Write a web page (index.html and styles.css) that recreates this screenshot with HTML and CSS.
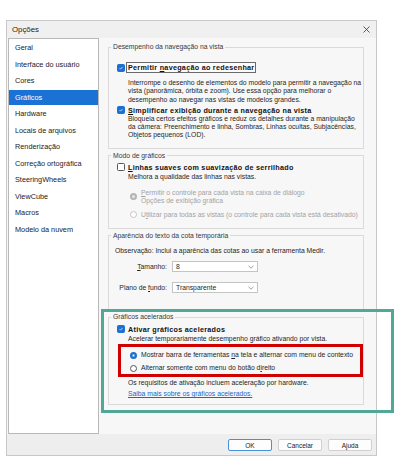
FILE: index.html
```html
<!DOCTYPE html>
<html>
<head>
    <meta charset="utf-8">
    <title>Opções</title>
    <link rel="stylesheet" href="styles.css">
</head>
<body>
<div class="screen">
    <div class="dialog">
        <div class="titlebar">
            <span class="title">Opções</span>
            <svg class="close" width="7" height="7" viewBox="0 0 7 7"><path d="M0.5 0.5L6.5 6.5M6.5 0.5L0.5 6.5" stroke="#333" stroke-width="0.8" fill="none"/></svg>
        </div>

        <div class="main">
            <ul class="nav">
                <li>Geral</li>
                <li>Interface do usuário</li>
                <li>Cores</li>
                <li class="active">Gráficos</li>
                <li>Hardware</li>
                <li>Locais de arquivos</li>
                <li>Renderização</li>
                <li>Correção ortográfica</li>
                <li>SteeringWheels</li>
                <li>ViewCube</li>
                <li>Macros</li>
                <li>Modelo da nuvem</li>
            </ul>

            <div class="panel">
                <!-- navegação -->
                <fieldset class="group g-nav">
                    <legend>Desempenho da navegação na vista</legend>
                    <div class="opt o1">
                        <span class="box checked"><svg viewBox="0 0 8 8"><path d="M2 4.1l1.4 1.4L6.1 2.6" stroke="#fff" stroke-width="0.9" fill="none"/></svg></span>
                        <span class="strong focus">Permitir <u>n</u>avegação ao redesenhar</span>
                    </div>
                    <p class="desc d1">Interrompe o desenho de elementos do modelo para permitir a navegação na<br>vista (panorâmica, órbita e zoom). Use essa opção para melhorar o<br>desempenho ao navegar nas vistas de modelos grandes.</p>
                    <div class="opt o2">
                        <span class="box checked"><svg viewBox="0 0 8 8"><path d="M2 4.1l1.4 1.4L6.1 2.6" stroke="#fff" stroke-width="0.9" fill="none"/></svg></span>
                        <span class="strong"><u>S</u>implificar exibição durante a navegação na vista</span>
                    </div>
                    <p class="desc">Bloqueia certos efeitos gráficos e reduz os detalhes durante a manipulação<br>da câmera: Preenchimento e linha, Sombras, Linhas ocultas, Subjacências,<br>Objetos pequenos (LOD).</p>
                </fieldset>

                <!-- modo -->
                <fieldset class="group g-mode">
                    <legend>Modo de gráficos</legend>
                    <div class="opt o3">
                        <span class="box"></span>
                        <span class="strong"><u>L</u>inhas suaves com suavização de serrilhado</span>
                    </div>
                    <p class="desc d3">Melhora a qualidade das linhas nas vistas.</p>
                    <div class="radio-row r1 disabled">
                        <span class="radio dis-on"></span>
                        <span><u>P</u>ermitir o controle para cada vista na caixa de diálogo<br>Opções de exibição gráfica</span>
                    </div>
                    <div class="radio-row r2 disabled">
                        <span class="radio dis-off"></span>
                        <span>U<u>t</u>ilizar para todas as vistas (o controle para cada vista está desativado)</span>
                    </div>
                </fieldset>

                <!-- cota temporária -->
                <fieldset class="group g-dim">
                    <legend>Aparência do texto da cota temporária</legend>
                    <p class="note">Observação: Inclui a aparência das cotas ao usar a ferramenta Medir.</p>
                    <div class="field f1">
                        <label><u>T</u>amanho:</label>
                        <div class="select"><span>8</span><svg width="6" height="4" viewBox="0 0 6 4"><path d="M0.5 0.8L3 3.2L5.5 0.8" stroke="#777" stroke-width="0.7" fill="none"/></svg></div>
                    </div>
                    <div class="field f2">
                        <label>Plano de <u>f</u>undo:</label>
                        <div class="select"><span>Transparente</span><svg width="6" height="4" viewBox="0 0 6 4"><path d="M0.5 0.8L3 3.2L5.5 0.8" stroke="#777" stroke-width="0.7" fill="none"/></svg></div>
                    </div>
                </fieldset>

                <!-- acelerados -->
                <fieldset class="group g-acc">
                    <legend>Gráficos acelerados</legend>
                    <div class="opt o4">
                        <span class="box checked"><svg viewBox="0 0 8 8"><path d="M2 4.1l1.4 1.4L6.1 2.6" stroke="#fff" stroke-width="0.9" fill="none"/></svg></span>
                        <span class="strong">Ativar gráficos acelerados</span>
                    </div>
                    <p class="desc d4">Acelerar temporariamente desempenho gráfico ativando por vista.</p>
                    <div class="radio-row r3">
                        <span class="radio on"></span>
                        <span>Mostrar barra de ferramentas <u>n</u>a tela e alternar com menu de contexto</span>
                    </div>
                    <div class="radio-row r4">
                        <span class="radio"></span>
                        <span>Alternar somente com menu do botão d<u>i</u>reito</span>
                    </div>
                    <p class="desc d5">Os requisitos de ativação incluem aceleração por hardware.</p>
                    <p class="desc d6"><a href="#">Saiba mais sobre os gráficos acelerados.</a></p>
                </fieldset>
            </div>
        </div>

        <div class="footer">
            <button class="btn default">OK</button>
            <button class="btn">Cancelar</button>
            <button class="btn">Ajuda</button>
        </div>
    </div>

    <div class="mark mark-green"></div>
    <div class="mark mark-red"></div>
</div>
</body>
</html>
```

FILE: styles.css
```css
* {
    box-sizing: border-box;
}
body {
    margin: 0;
    background: #fff;
    font-family: "Liberation Sans", Arial, sans-serif;
    font-size: 6.8px;
    color: #1f1f1f;
}
.screen {
    position: relative;
    width: 400px;
    height: 466px;
    padding: 20px 0 0 6px;
}
.dialog {
    width: 371px;
    height: 436px;
    border: 1px solid #c8c8c8;
    background: #f7f7f7;
    display: flex;
    flex-direction: column;
}
.titlebar {
    height: 17px;
    background: #f0f0f0;
    display: flex;
    align-items: center;
    justify-content: space-between;
    padding: 0 6px 0 5px;
}
.title {
    font-size: 7.8px;
    color: #222;
}
.main {
    display: flex;
    height: 396px;
}
.nav {
    width: 91px;
    margin: 0 0 0 1px;
    padding: 1px 0 0;
    list-style: none;
    background: #fff;
    border: 1px solid #b9b9b9;
    font-size: 7.3px;
}
.nav li {
    height: 15px;
    line-height: 15px;
    margin-bottom: 1.5px;
    padding-left: 6px;
    color: #222;
}
.nav li.active {
    background: #1a73d4;
    color: #fff;
}
.panel {
    flex: 1;
    padding: 5px 12px 0 9px;
}
.group {
    margin: 0 0 3px;
    padding: 0 0 6px 8px;
    border: 1px solid #dadada;
    min-width: 0;
}
.group legend {
    margin-left: -6px;
    padding: 0 2px;
    height: 8px;
    line-height: 8px;
    color: #3a3a3a;
}
.opt {
    display: flex;
    align-items: center;
    gap: 3px;
    height: 9px;
}
.strong {
    font-weight: bold;
    font-size: 7.2px;
    letter-spacing: 0.28px;
    color: #111;
    line-height: 9px;
    white-space: nowrap;
}
.focus {
    outline: 1px solid #6a6a6a;
    background: #fbfbfb;
    padding: 0 1px;
    margin-left: -1px;
}
.box {
    width: 8px;
    height: 8px;
    border: 1px solid #555;
    border-radius: 1.5px;
    background: #fff;
    flex: none;
    display: flex;
}
.box.checked {
    background: #1d6fd1;
    border-color: #1d6fd1;
}
.box svg {
    width: 100%;
    height: 100%;
}
.desc, .note {
    margin: 0;
    padding-left: 11px;
    line-height: 8.3px;
    white-space: nowrap;
}
.note {
    padding-left: 0;
    margin: 7px 0 0 -2px;
}
.g-nav { padding-bottom: 8px; }
.o1 { margin-top: 12px; }
.d1 { margin-top: 7px; }
.o2 { margin-top: 2px; }

.o3 { margin-top: 3px; }
.d3 { margin-top: 1.5px; }
.g-mode { padding-bottom: 9px; }

.radio-row {
    display: flex;
    align-items: center;
    gap: 4px;
    padding-left: 13px;
    line-height: 8.3px;
    white-space: nowrap;
}
.radio-row.disabled {
    color: #a3a3a3;
}
.r1 { margin-top: 7px; }
.r2 { margin-top: 5.5px; }
.radio {
    width: 7px;
    height: 7px;
    border-radius: 50%;
    border: 1px solid #555;
    background: #fff;
    flex: none;
}
.radio.on {
    border: 2px solid #1d6fd1;
    background: #fff;
    box-shadow: inset 0 0 0 0.6px #1d6fd1;
}
.radio.dis-on {
    border: 2px solid #b5b5b5;
    background: #e6e6e6;
}
.radio.dis-off {
    border-color: #c4c4c4;
}

.g-dim { padding-bottom: 16px; }
.field {
    display: flex;
    align-items: center;
    gap: 5px;
}
.field label {
    width: 50px;
    text-align: right;
}
.f1 { margin-top: 6px; }
.f2 { margin-top: 10px; }
.select {
    width: 86px;
    height: 11px;
    border: 1px solid #c4c4c4;
    background: #fff;
    display: flex;
    align-items: center;
    justify-content: space-between;
    padding: 0 3px;
}

.o4 { margin-top: 3.5px; }
.d4 { margin-top: 1.5px; }
.r3 { margin-top: 7.5px; }
.r4 { margin-top: 4.7px; }
.d5 { margin-top: 6.8px; }
.d6 { margin-top: 2.7px; }
.g-acc { padding-bottom: 6px; }
.d6 a {
    color: #1a66cc;
}

.footer {
    height: 21px;
    background: #eeeeee;
    display: flex;
    justify-content: flex-end;
    align-items: flex-start;
    gap: 6px;
    padding: 5px 4px 0 0;
}
.btn {
    width: 44px;
    height: 12px;
    padding: 0;
    font-family: inherit;
    font-size: 6.5px;
    color: #222;
    background: #fdfdfd;
    border: 1px solid #d0d0d0;
    border-radius: 2px;
}
.btn.default {
    border-color: #4a90d9;
}

.mark {
    position: absolute;
    border-style: solid;
}
.mark-green {
    left: 101px;
    top: 309px;
    width: 293px;
    height: 104px;
    border-width: 3px;
    border-color: #52a898;
}
.mark-red {
    left: 118px;
    top: 344px;
    width: 245px;
    height: 33px;
    border-width: 3px;
    border-color: #d10000;
}
```
